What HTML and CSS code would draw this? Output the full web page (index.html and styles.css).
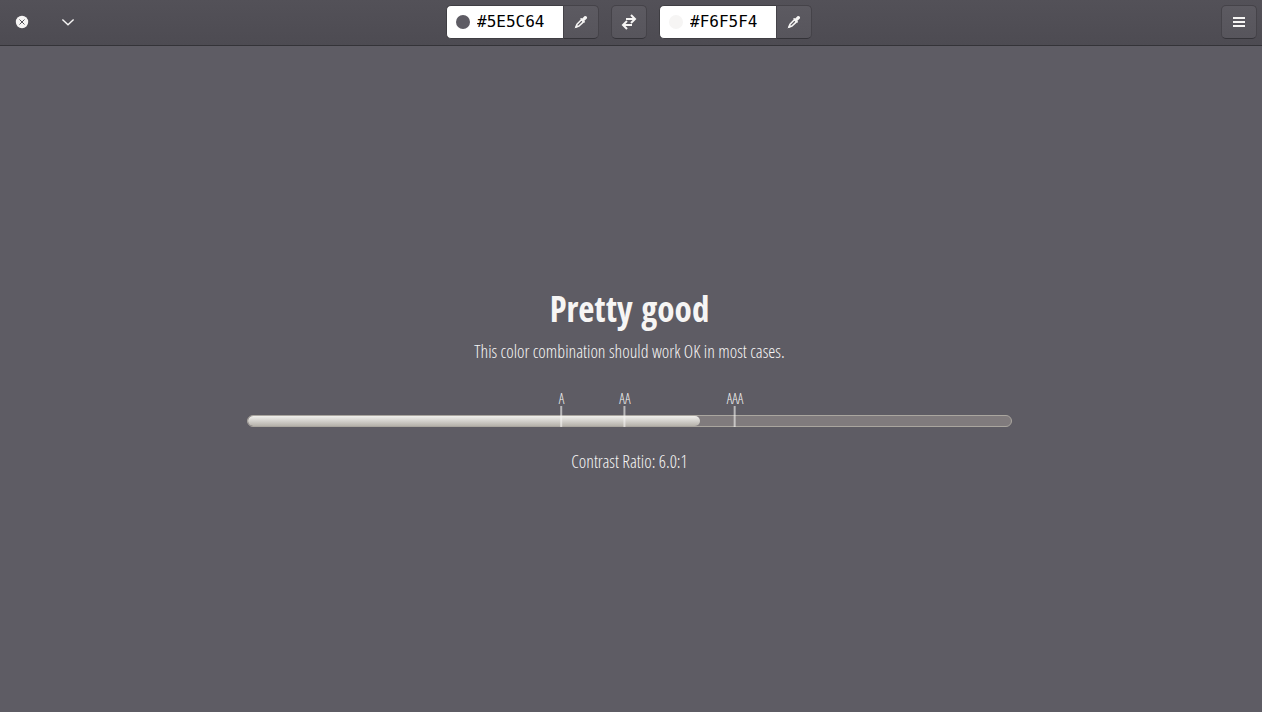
FILE: index.html
```html
<!DOCTYPE html>
<html lang="en">
<head>
  <meta charset="UTF-8">
  <title>Contrast</title>
  <meta name="viewport" content="width=device-width, initial-scale=1.0">
  <link rel="stylesheet" href="styles.css">
</head>
<body>
  <header>
    <div class="window-controls">
      <button type="button" class="control" aria-label="Close">
        <svg width="14" height="14" viewBox="0 0 14 14"><circle cx="7" cy="7" r="6.2" fill="#f6f5f4"/><path d="M4.5 4.5l5 5M9.5 4.5l-5 5" stroke="#55545a" stroke-width="1"/></svg>
      </button>
      <button type="button" class="control" aria-label="Minimize">
        <svg width="14" height="14" viewBox="0 0 14 14"><path d="M1.4 4.4l5.6 5.4 5.6-5.4" fill="none" stroke="#f6f5f4" stroke-width="1.4"/></svg>
      </button>
    </div>
    <div class="colors">
      <div class="color">
        <label class="field">
          <span class="dot dark"></span>
          <input type="text" value="#5E5C64" aria-label="Background color" spellcheck="false">
        </label>
        <button type="button" class="btn pick" aria-label="Pick background color">
          <svg width="14" height="14" viewBox="0 0 14 14"><path d="M1.8 12.2l1.2-3L7.4 4.8l2 2L5 11z" fill="none" stroke="#f6f5f4" stroke-width="1.6" stroke-linejoin="round"/><path d="M.4 13.6l2.4-3.6 1.4 1.2z" fill="#f6f5f4"/><path d="M6 3.8l1.2-.8 1 .6 2-2.2c1.6-1.5 3.9.8 2.4 2.4l-2.2 2 .6 1-.8 1.2z" fill="#f6f5f4"/></svg>
        </button>
      </div>
      <button type="button" class="btn" aria-label="Swap colors">
        <svg width="16" height="16" viewBox="0 0 16 16"><path d="M5 5h8.6M10 1l4 4-4 4M11 11H2.4M6 7l-4 4 4 4" fill="none" stroke="#f6f5f4" stroke-width="2"/></svg>
      </button>
      <div class="color">
        <label class="field">
          <span class="dot light"></span>
          <input type="text" value="#F6F5F4" aria-label="Foreground color" spellcheck="false">
        </label>
        <button type="button" class="btn pick" aria-label="Pick foreground color">
          <svg width="14" height="14" viewBox="0 0 14 14"><path d="M1.8 12.2l1.2-3L7.4 4.8l2 2L5 11z" fill="none" stroke="#f6f5f4" stroke-width="1.6" stroke-linejoin="round"/><path d="M.4 13.6l2.4-3.6 1.4 1.2z" fill="#f6f5f4"/><path d="M6 3.8l1.2-.8 1 .6 2-2.2c1.6-1.5 3.9.8 2.4 2.4l-2.2 2 .6 1-.8 1.2z" fill="#f6f5f4"/></svg>
        </button>
      </div>
    </div>
    <button type="button" class="btn menu" aria-label="Menu">
      <svg width="12" height="10" viewBox="0 0 12 10"><path d="M0 0h12v2H0zM0 4h12v2H0zM0 8h12v2H0z" fill="#f6f5f4"/></svg>
    </button>
  </header>
  <main>
    <h1>Pretty good</h1>
    <p>This color combination should work OK in most cases.</p>
    <div class="level">
      <div class="track">
        <div class="fill" style="width: 59.2%"></div>
      </div>
      <span class="mark" style="left: 41.1%">A</span>
      <span class="mark" style="left: 49.4%">AA</span>
      <span class="mark" style="left: 63.8%">AAA</span>
    </div>
    <p>Contrast Ratio: 6.0:1</p>
  </main>
</body>
</html>
```
FILE: styles.css
```css
* {
  box-sizing: border-box;
}
body {
  margin: 0;
  min-height: 100vh;
  display: flex;
  flex-direction: column;
  background: #5e5c64;
  color: #f6f5f4;
  font-family: "Ubuntu Condensed", "Open Sans Condensed Light", "Open Sans Condensed", "Liberation Sans", sans-serif;
  font-size: 18px;
  font-weight: 300;
}
header {
  display: grid;
  grid-template-columns: 1fr auto 1fr;
  align-items: center;
  height: 46px;
  padding: 0 5px 2px 1px;
  background: linear-gradient(#535158, #4d4b52);
  border-bottom: 1px solid #343338;
}
.window-controls {
  display: flex;
  gap: 4px;
}
button {
  display: flex;
  align-items: center;
  justify-content: center;
  padding: 0;
  cursor: pointer;
}
.control {
  width: 42px;
  height: 34px;
  border: none;
  background: none;
}
.colors {
  display: flex;
  gap: 12px;
}
.color {
  display: flex;
}
.field {
  display: flex;
  align-items: center;
  gap: 7px;
  width: 117px;
  height: 34px;
  padding-left: 9px;
  background: white;
  border: 1px solid #3f3e43;
  border-right: none;
  border-radius: 5px 0 0 5px;
}
.dot {
  flex: none;
  width: 14px;
  height: 14px;
  border-radius: 50%;
}
.dark {
  background: #5e5c64;
}
.light {
  background: #f6f5f4;
}
input {
  flex: 1;
  min-width: 0;
  padding: 0;
  border: none;
  outline: none;
  background: none;
  color: black;
  font-family: "DejaVu Sans Mono", monospace;
  font-size: 16px;
}
.btn {
  width: 36px;
  height: 34px;
  background: linear-gradient(#5c5a61, #57555c);
  border: 1px solid #454349;
  border-bottom-color: #343338;
  border-radius: 5px;
}
.pick {
  border-radius: 0 5px 5px 0;
}
.menu {
  justify-self: end;
}
main {
  flex: 1;
  display: flex;
  flex-direction: column;
  align-items: center;
  justify-content: center;
  padding: 0 3px 2px 0;
}
h1 {
  margin: 0 0 8px;
  font-family: "Ubuntu Condensed", "Open Sans Condensed", "Liberation Sans", sans-serif;
  font-size: 35px;
  font-weight: 700;
  line-height: 48px;
}
p {
  margin: 0;
  line-height: 20px;
}
.level {
  position: relative;
  width: 61%;
  max-width: 765px;
  margin: 30px 0 24px;
  padding-top: 24px;
}
.track {
  height: 12px;
  background: #807b7d;
  border: 1px solid #aaa69f;
  border-radius: 6px;
  overflow: hidden;
}
.fill {
  height: 100%;
  background: linear-gradient(#f0efec, #b5b1aa);
  border-radius: 5px;
}
.mark {
  position: absolute;
  bottom: 0;
  display: flex;
  flex-direction: column;
  align-items: center;
  font-size: 14px;
  line-height: 15px;
  transform: translateX(-50%);
}
.mark::after {
  content: "";
  width: 2px;
  height: 21px;
  background: rgba(246, 245, 244, 0.6);
}
```
